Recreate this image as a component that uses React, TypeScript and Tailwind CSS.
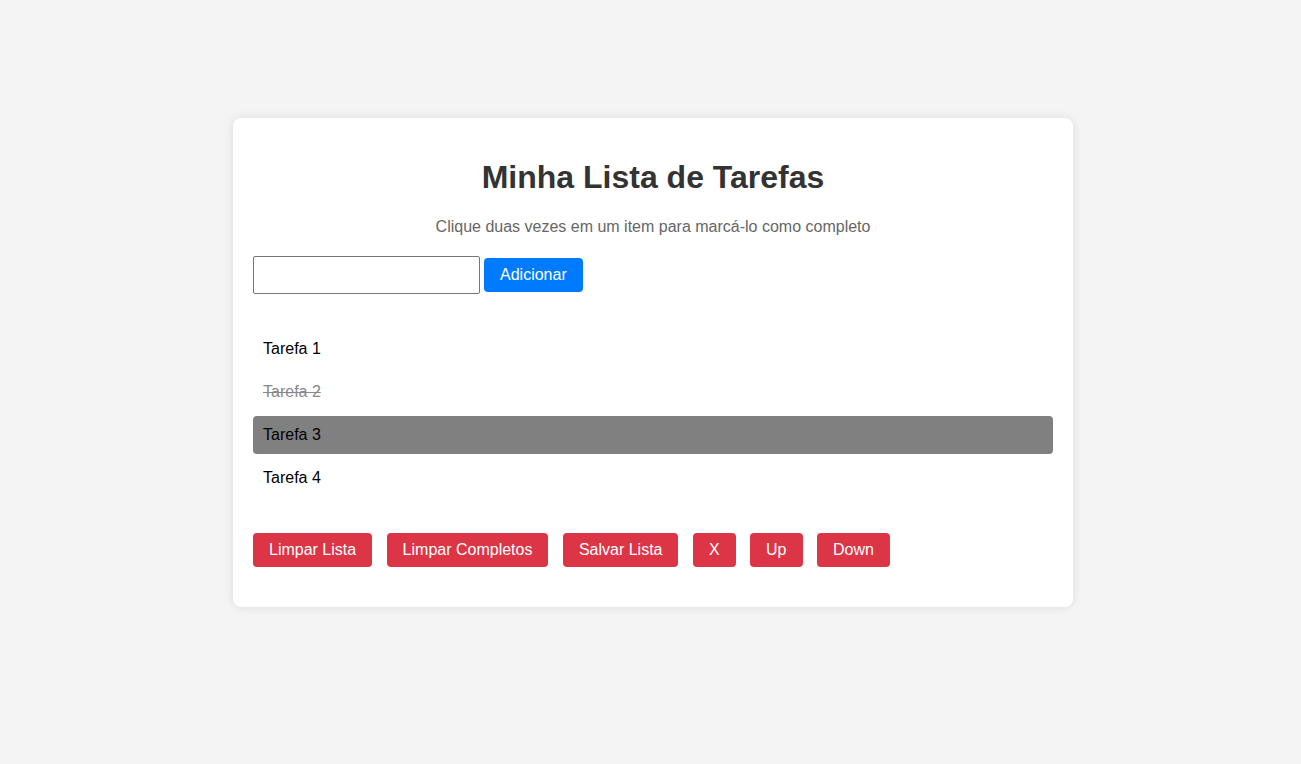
export default function App() {
  const items = [
    { t: "Tarefa 1", done: false, sel: false },
    { t: "Tarefa 2", done: true, sel: false },
    { t: "Tarefa 3", done: false, sel: true },
    { t: "Tarefa 4", done: false, sel: false },
  ];
  const btns = ["Limpar Lista", "Limpar Completos", "Salvar Lista", "X", "Up", "Down"];
  return (
    <div
      className="min-h-[764px] w-full bg-[#f4f4f4] pt-[118px] pl-[5px] flex justify-center items-start"
      style={{ fontFamily: '"Liberation Sans", Arial, sans-serif' }}
    >
      <div className="w-[840px] bg-white rounded-[8px] shadow-[0_0_10px_rgba(0,0,0,0.1)] px-[20px] pt-[20px] pb-[20px]">
        <h1 className="mt-[21px] mb-[22px] text-[32px] leading-[37px] font-bold text-[#333] text-center">
          Minha Lista de Tarefas
        </h1>
        <p className="text-[16px] leading-[18px] text-[#666] text-center">
          Clique duas vezes em um item para marcá-lo como completo
        </p>
        <div className="mt-[20px] flex items-center">
          <input
            type="text"
            className="w-[227px] h-[38px] border border-[#767676] rounded-[2px] px-2 text-[16px] outline-none"
          />
          <button className="ml-[4px] h-[34px] px-[16px] bg-[#007bff] text-white text-[16px] leading-[18px] rounded-[4px]">
            Adicionar
          </button>
        </div>
        <ul className="mt-[36px]">
          {items.map((it) => (
            <li
              key={it.t}
              className={`h-[38px] mb-[5px] px-[10px] flex items-center text-[16px] leading-[18px] rounded-[4px] ${
                it.sel ? "bg-[#808080] text-black" : ""
              } ${it.done ? "line-through text-[#888]" : "text-black"}`}
            >
              {it.t}
            </li>
          ))}
        </ul>
        <div className="mt-[36px] mb-[20px] h-[34px] text-[16px] leading-[34px] whitespace-nowrap">
          {btns.map((b, i) => (
            <span key={b}>
              <button className="inline-block align-top mr-[10px] h-[34px] px-[16px] bg-[#dc3545] text-white text-[16px] leading-[18px] rounded-[4px]">
                {b}
              </button>
              {i < btns.length - 1 ? " " : ""}
            </span>
          ))}
        </div>
      </div>
    </div>
  );
}
